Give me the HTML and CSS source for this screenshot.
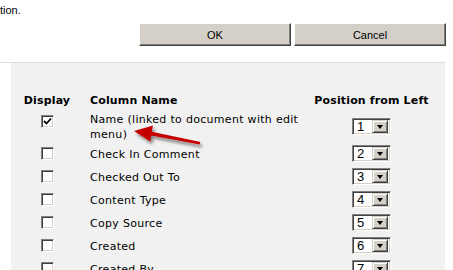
FILE: index.html
```html
<!doctype html>
<html lang="en">
<head>
    <meta charset="UTF-8">
    <title>Change Column</title>
    <link rel="stylesheet" href="styles.css">
</head>
<body>
<p class="intro">tion.</p>
<div class="actions">
    <button class="btn">OK</button>
    <button class="btn">Cancel</button>
</div>
<div class="rule"></div>
<div class="panel">
    <table class="columns">
        <thead>
        <tr>
            <th class="col-display">Display</th>
            <th class="col-name">Column Name</th>
            <th class="col-pos">Position from Left</th>
        </tr>
        </thead>
        <tbody>
        <tr>
            <td class="col-display"><span class="check checked"><svg width="9" height="9" viewBox="0 0 9 9"><path d="M1 4 L3.5 6.5 L8 1.5" fill="none" stroke="#000" stroke-width="1.8"/></svg></span></td>
            <td class="col-name">Name (linked to document with edit menu)</td>
            <td class="col-pos"><span class="combo"><span class="combo-value">1</span><span class="combo-btn"><i></i></span></span></td>
        </tr>
        <tr>
            <td class="col-display"><span class="check"></span></td>
            <td class="col-name">Check In Comment</td>
            <td class="col-pos"><span class="combo"><span class="combo-value">2</span><span class="combo-btn"><i></i></span></span></td>
        </tr>
        <tr>
            <td class="col-display"><span class="check"></span></td>
            <td class="col-name">Checked Out To</td>
            <td class="col-pos"><span class="combo"><span class="combo-value">3</span><span class="combo-btn"><i></i></span></span></td>
        </tr>
        <tr>
            <td class="col-display"><span class="check"></span></td>
            <td class="col-name">Content Type</td>
            <td class="col-pos"><span class="combo"><span class="combo-value">4</span><span class="combo-btn"><i></i></span></span></td>
        </tr>
        <tr>
            <td class="col-display"><span class="check"></span></td>
            <td class="col-name">Copy Source</td>
            <td class="col-pos"><span class="combo"><span class="combo-value">5</span><span class="combo-btn"><i></i></span></span></td>
        </tr>
        <tr>
            <td class="col-display"><span class="check"></span></td>
            <td class="col-name">Created</td>
            <td class="col-pos"><span class="combo"><span class="combo-value">6</span><span class="combo-btn"><i></i></span></span></td>
        </tr>
        <tr>
            <td class="col-display"><span class="check"></span></td>
            <td class="col-name">Created By</td>
            <td class="col-pos"><span class="combo"><span class="combo-value">7</span><span class="combo-btn"><i></i></span></span></td>
        </tr>
        </tbody>
    </table>
</div>
<svg class="pointer" width="453" height="270" viewBox="0 0 453 270">
    <defs>
        <filter id="shade" x="-20%" y="-50%" width="150%" height="250%">
            <feDropShadow dx="2" dy="3" stdDeviation="1.6" flood-color="#000" flood-opacity="0.45"/>
        </filter>
    </defs>
    <polygon filter="url(#shade)" fill="#c40000"
             points="134,131 153,125.5 151.8,131.7 200.4,142 199.6,144.4 151.3,135.6 150.3,141.5"/>
</svg>
</body>
</html>
```

FILE: styles.css
```css
* {
    margin: 0;
    padding: 0;
    box-sizing: border-box;
}

html,
body {
    overflow: hidden;
}

body {
    background: #fff;
    color: #000;
    font-family: "Liberation Sans", Arial, sans-serif;
    font-size: 11px;
}

.intro {
    padding-top: 4px;
    line-height: 13px;
}

.actions {
    display: flex;
    justify-content: flex-end;
    gap: 3px;
    margin-top: 6px;
    padding-right: 7px;
}

.btn {
    width: 152px;
    height: 23px;
    background: #d4d0c8;
    border: 1px solid;
    border-color: #fff #404040 #404040 #fff;
    box-shadow: inset -1px -1px #808080;
    font-family: "Liberation Sans", Arial, sans-serif;
    font-size: 11px;
    color: #000;
}

.rule {
    margin-top: 16px;
    width: 445px;
    height: 1px;
    background: #dcdcdc;
}

.panel {
    margin-left: 11px;
    width: 434px;
    height: 300px;
    background: #f1f1f1;
    padding: 28px 2px 0 12px;
}

.columns {
    border-spacing: 0;
    table-layout: fixed;
    width: 420px;
    font-family: "DejaVu Sans", Verdana, sans-serif;
    font-size: 11px;
    line-height: 15px;
    letter-spacing: 0.3px;
}

.columns th {
    height: 19px;
    font-weight: bold;
    vertical-align: middle;
    letter-spacing: 0.15px;
}

.columns td {
    padding: 1px 0;
    vertical-align: middle;
}

.col-display {
    width: 48px;
    text-align: center;
}

.col-name {
    width: 229px;
    padding-left: 19px !important;
    text-align: left;
}

.col-pos {
    width: 143px;
    text-align: center;
}

.columns td.col-name {
    padding-top: 2px;
    padding-bottom: 0;
}

.columns td.col-display {
    vertical-align: top;
    padding-top: 5px;
}

.check {
    display: block;
    width: 13px;
    height: 13px;
    margin: 0 auto;
    background: #fff;
    border: 1px solid;
    border-color: #808080 #fff #fff #808080;
    box-shadow: inset 1px 1px #404040, inset -1px -1px #d4d0c8;
    position: relative;
}

.check svg {
    position: absolute;
    left: 1px;
    top: 1px;
}

.combo {
    display: flex;
    width: 39px;
    height: 17px;
    margin: 2px auto;
    background: #fff;
    border: 1px solid;
    border-color: #808080 #fff #fff #808080;
    box-shadow: inset 1px 1px #404040, inset -1px -1px #d4d0c8;
    padding: 2px 2px 2px 1px;
    letter-spacing: 0;
}

.combo-value {
    flex: 1;
    text-align: left;
    padding-left: 3px;
    font-family: "Liberation Sans", Arial, sans-serif;
    font-size: 13px;
    line-height: 11px;
}

.combo-btn {
    width: 16px;
    height: 13px;
    margin-top: -1px;
    background: #d4d0c8;
    border: 1px solid;
    border-color: #d4d0c8 #404040 #404040 #d4d0c8;
    box-shadow: inset 1px 1px #fff, inset -1px -1px #808080;
    display: flex;
    align-items: center;
    justify-content: center;
}

.combo-btn i {
    width: 0;
    height: 0;
    border-left: 3.5px solid transparent;
    border-right: 3.5px solid transparent;
    border-top: 4px solid #000;
    margin-top: 1px;
}

.pointer {
    position: absolute;
    left: 0;
    top: 0;
    pointer-events: none;
}
```
